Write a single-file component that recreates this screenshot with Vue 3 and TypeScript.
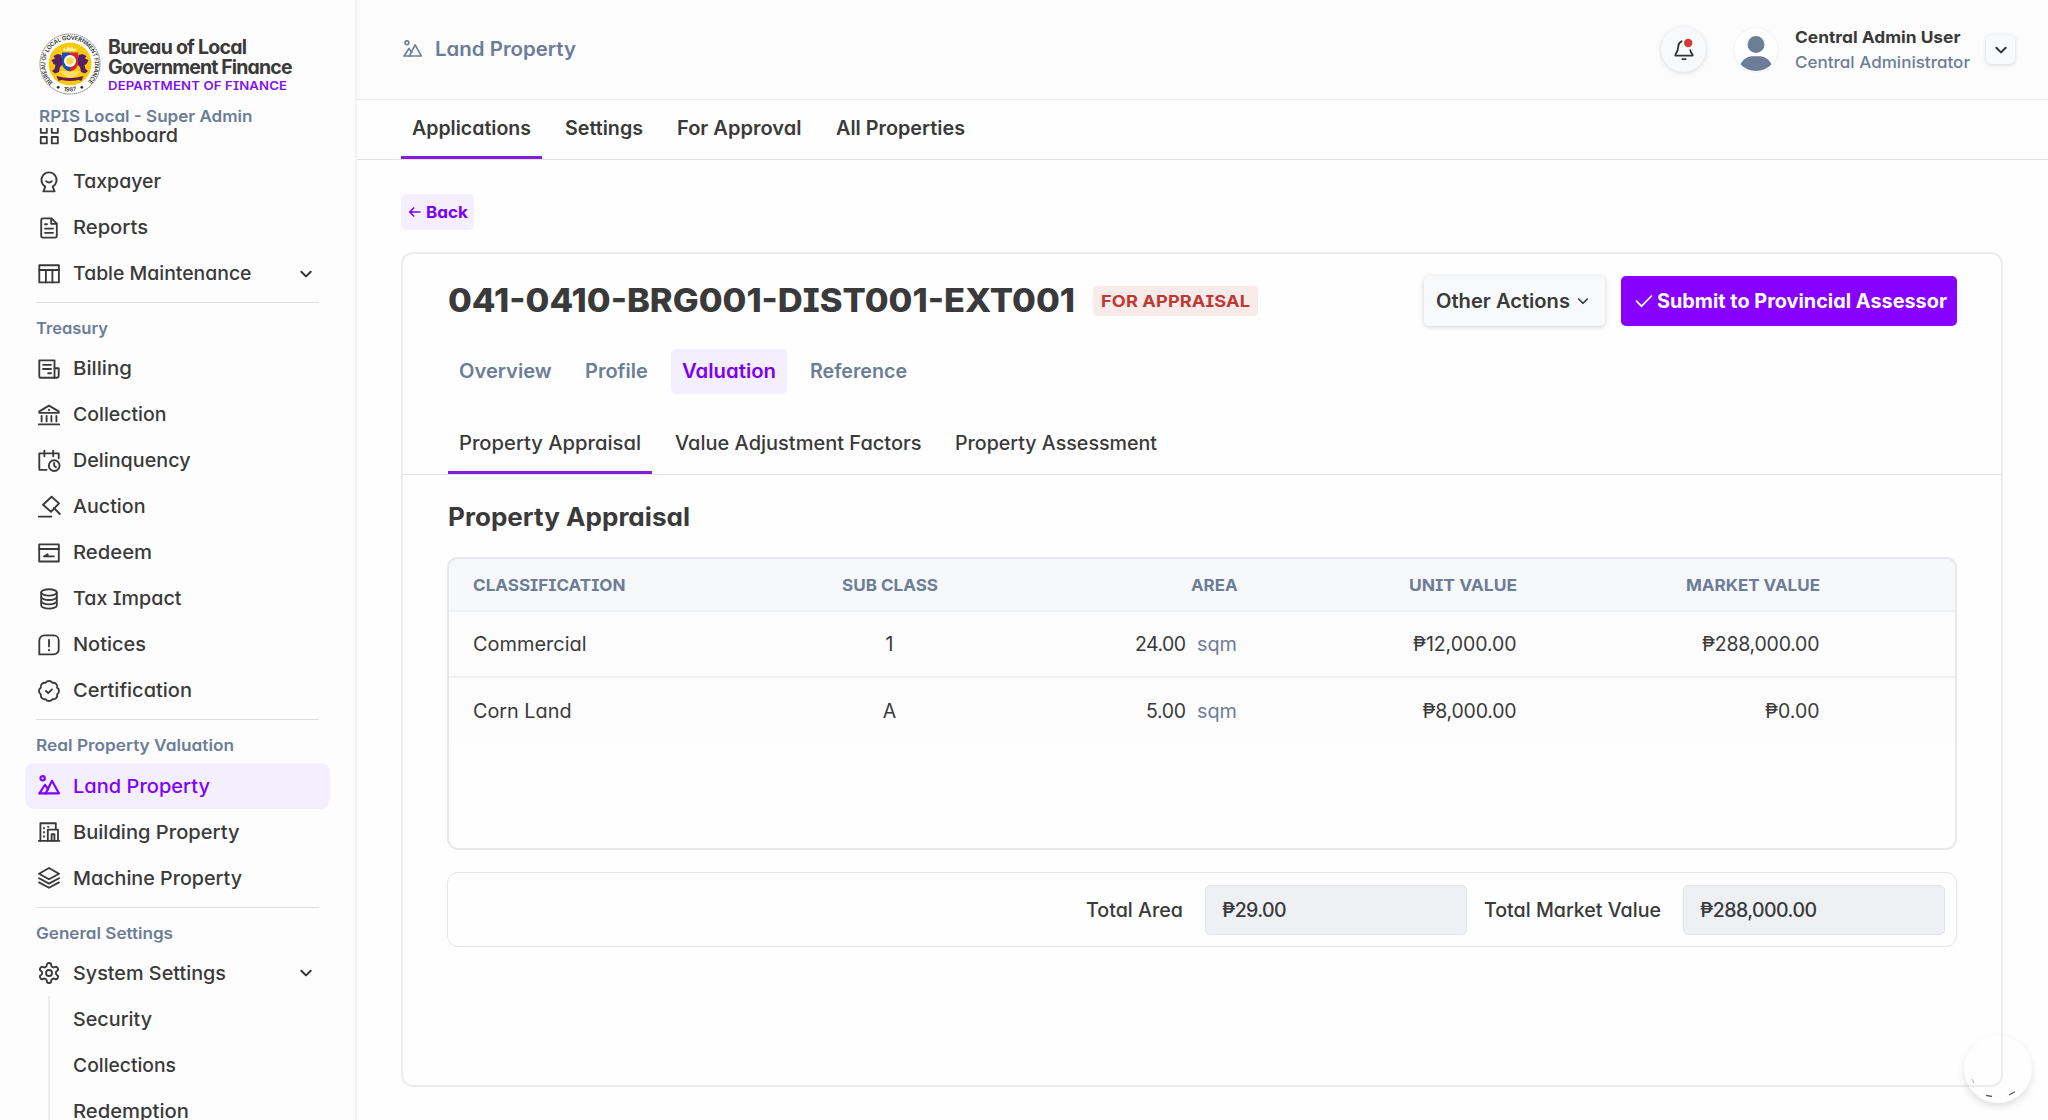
<script setup lang="ts">
type NavItem = { label: string; icon?: string; width: number; active?: boolean; chevron?: boolean }
type NavGroup = { title?: string; titleWidth?: number; items: NavItem[] }

// Widens a line of text, first through its letters and then through tracking, to the given measure.
const vFit = {
  mounted(el: HTMLElement, binding: { value: number }) {
    const count = (el.textContent ?? '').trim().length
    const natural = el.getBoundingClientRect().width
    if (count < 2) return
    const scale = Math.min(1.1, Math.max(1, binding.value / natural))
    const spacing = (binding.value / scale - natural) / (count - 1)
    el.style.width = `${binding.value}px`
    el.style.letterSpacing = `${spacing}px`
    el.style.transform = `scaleX(${scale})`
  },
}

const icons: Record<string, string[]> = {
  dashboard: ['M3.8 2.6h6v6.2h-6z', 'M14.8 2.6h6v6.2h-6z', 'M3.8 13h6v6.4h-6z', 'M14.8 13h6v6.4h-6z'],
  taxpayer: ['M8.3 16.6a7.6 7.6 0 1 1 7.4 0l1.9 4.8H6.4z', 'M9.2 11.2c1.6 1.7 4 1.7 5.6 0'],
  reports: ['M14.6 2.4H6a1.8 1.8 0 0 0-1.8 1.8v15.6A1.8 1.8 0 0 0 6 21.6h12a1.8 1.8 0 0 0 1.8-1.8V7.6z', 'M14.2 2.6v5.2h5.4', 'M8 8.2h2', 'M8 12.6h8', 'M8 16.8h8'],
  table: ['M2.3 3.2h19.6v17.2H2.3z', 'M2.3 8h19.6', 'M8.9 8v12.4', 'M15.4 8v12.4'],
  billing: ['M2.3 3.3h15.2v17.4H3.6a1.3 1.3 0 0 1-1.3-1.3z', 'M17.5 11.2h4.2v7.6a1.9 1.9 0 0 1-1.9 1.9h-2.3', 'M6 7.8h8', 'M6 12h8', 'M11.2 16.2H14'],
  collection: ['M2.3 8.4 12 2.6l9.7 5.8v1.5H2.3z', 'M4.6 13v5.4', 'M9.6 13v5.4', 'M14.4 13v5.4', 'M19.4 13v5.4', 'M1.8 21.4h20.4', 'M12 6.6v.6'],
  delinquency: ['M9.6 20.8H2.3V4.4h19.4v4.8', 'M7.4 1.6v5.6', 'M16.2 1.6v5.6', 'M22.6 16.6a5.4 5.4 0 1 1-10.8 0 5.4 5.4 0 0 1 10.8 0z', 'M17.2 14v2.8l1.8 1.4'],
  auction: ['M1.8 21.6h12.6', 'M14.6 1.8 22 8.4l-8 8.4L6 9.8z', 'M17 13l5.8 6'],
  redeem: ['M2.2 3.3h19.6v17.2H2.2z', 'M2.2 8h19.6', 'M7 15.4h9.8', 'M7.6 15.2l3-2v2'],
  tax: ['M19.8 5.4c0 1.8-3.5 3.2-7.8 3.2S4.2 7.2 4.2 5.4 7.7 2.2 12 2.2s7.8 1.4 7.8 3.2z', 'M4.2 5.4v13c0 1.8 3.5 3.2 7.8 3.2s7.8-1.4 7.8-3.2v-13', 'M4.2 9.8c0 1.8 3.5 3.2 7.8 3.2s7.8-1.4 7.8-3.2', 'M4.2 14.1c0 1.8 3.5 3.2 7.8 3.2s7.8-1.4 7.8-3.2'],
  notices: ['M2.3 21.4V7.4a5 5 0 0 1 5-5h9.4a5 5 0 0 1 5 5v9a5 5 0 0 1-5 5z', 'M12 6.8v6.6', 'M12 16.6v.8'],
  certification: ['M3.85 8.62a4 4 0 0 1 4.78-4.77 4 4 0 0 1 6.74 0 4 4 0 0 1 4.78 4.78 4 4 0 0 1 0 6.74 4 4 0 0 1-4.77 4.78 4 4 0 0 1-6.75 0 4 4 0 0 1-4.78-4.77 4 4 0 0 1 0-6.76z', 'M9 12l2.2 2.2 3.8-3.8'],
  land: ['M7.8 4.3a2.2 2.2 0 1 1-4.4 0 2.2 2.2 0 0 1 4.4 0z', 'M2.4 19.4 8 10.8l3.2 4.6', 'M8.6 19.4 15 6.8l7 12.6z', 'M2.4 19.4H9'],
  building: ['M1.8 20.8h20.6', 'M3.4 20.8V3.2h15.4V9', 'M10.8 20.8V9.6H21v11.2', 'M14.6 20.8v-6.6h2.8v6.6', 'M7 7.8v.5', 'M7 12v.5', 'M7 16.2v.5', 'M11 6.8h.5'],
  machine: ['M12 2 22 7.7l-10 5.5L2 7.7z', 'M2 12.2l10 5.4 10-5.4', 'M2 16.4l10 5.4 10-5.4'],
  settings: ['M12.22 2h-.44a2 2 0 0 0-2 2v.18a2 2 0 0 1-1 1.73l-.43.25a2 2 0 0 1-2 0l-.15-.08a2 2 0 0 0-2.73.73l-.22.38a2 2 0 0 0 .73 2.73l.15.1a2 2 0 0 1 1 1.72v.51a2 2 0 0 1-1 1.74l-.15.09a2 2 0 0 0-.73 2.73l.22.38a2 2 0 0 0 2.73.73l.15-.08a2 2 0 0 1 2 0l.43.25a2 2 0 0 1 1 1.73V20a2 2 0 0 0 2 2h.44a2 2 0 0 0 2-2v-.18a2 2 0 0 1 1-1.73l.43-.25a2 2 0 0 1 2 0l.15.08a2 2 0 0 0 2.73-.73l.22-.39a2 2 0 0 0-.73-2.73l-.15-.08a2 2 0 0 1-1-1.74v-.5a2 2 0 0 1 1-1.74l.15-.09a2 2 0 0 0 .73-2.73l-.22-.38a2 2 0 0 0-2.73-.73l-.15.08a2 2 0 0 1-2 0l-.43-.25a2 2 0 0 1-1-1.73V4a2 2 0 0 0-2-2z', 'M15 12a3 3 0 1 1-6 0 3 3 0 0 1 6 0z'],
}

const groups: NavGroup[] = [
  {
    items: [
      { label: 'Dashboard', icon: 'dashboard', width: 105 },
      { label: 'Taxpayer', icon: 'taxpayer', width: 88 },
      { label: 'Reports', icon: 'reports', width: 75 },
      { label: 'Table Maintenance', icon: 'table', width: 178.5, chevron: true },
    ],
  },
  {
    title: 'Treasury',
    titleWidth: 72,
    items: [
      { label: 'Billing', icon: 'billing', width: 59 },
      { label: 'Collection', icon: 'collection', width: 93.5 },
      { label: 'Delinquency', icon: 'delinquency', width: 117.5 },
      { label: 'Auction', icon: 'auction', width: 72.5 },
      { label: 'Redeem', icon: 'redeem', width: 79 },
      { label: 'Tax Impact', icon: 'tax', width: 108.5 },
      { label: 'Notices', icon: 'notices', width: 73 },
      { label: 'Certification', icon: 'certification', width: 119 },
    ],
  },
  {
    title: 'Real Property Valuation',
    titleWidth: 198,
    items: [
      { label: 'Land Property', icon: 'land', width: 137, active: true },
      { label: 'Building Property', icon: 'building', width: 166.5 },
      { label: 'Machine Property', icon: 'machine', width: 169 },
    ],
  },
  {
    title: 'General Settings',
    titleWidth: 137,
    items: [{ label: 'System Settings', icon: 'settings', width: 153, chevron: true }],
  },
]

const subItems: NavItem[] = [
  { label: 'Security', width: 79 },
  { label: 'Collections', width: 103 },
  { label: 'Redemption', width: 116 },
]

const topTabs = [
  { label: 'Applications', width: 119 },
  { label: 'Settings', width: 78 },
  { label: 'For Approval', width: 124.5 },
  { label: 'All Properties', width: 129 },
]
const pageTabs = [
  { label: 'Overview', width: 92.7 },
  { label: 'Profile', width: 62.8 },
  { label: 'Valuation', width: 94 },
  { label: 'Reference', width: 97 },
]
const valuationTabs = [
  { label: 'Property Appraisal', width: 182 },
  { label: 'Value Adjustment Factors', width: 246.5 },
  { label: 'Property Assessment', width: 202 },
]

const rows = [
  { name: 'Commercial', nameW: 113.5, sub: '1', area: '24.00', areaW: 51, unit: '₱12,000.00', unitW: 103.5, market: '₱288,000.00', marketW: 117.5 },
  { name: 'Corn Land', nameW: 98.5, sub: 'A', area: '5.00', areaW: 40, unit: '₱8,000.00', unitW: 94, market: '₱0.00', marketW: 54.5 },
]
</script>

<template>
  <div class="app">
    <aside class="sidebar">
      <div class="brand">
        <div class="brand-row">
          <svg class="seal" viewBox="0 0 62 62">
            <defs>
              <path id="seal-top" d="M14 49.4A24.8 24.8 0 1 1 48 49.4" />
              <path id="seal-bottom" d="M20 56.2A28.5 28.5 0 0 0 42 56.2" />
            </defs>
            <circle cx="31" cy="31" r="30" fill="#fff" stroke="#666" stroke-width=".9" stroke-dasharray="1.5 .6" />
            <circle cx="31" cy="31" r="21.5" fill="#fac90c" />
            <text class="seal-text"><textPath href="#seal-top" textLength="117">BUREAU OF LOCAL GOVERNMENT FINANCE</textPath></text>
            <text class="seal-text"><textPath href="#seal-bottom" startOffset="50%" text-anchor="middle">1987</textPath></text>
            <circle cx="19.2" cy="54.3" r="1.4" fill="#333" />
            <circle cx="42.8" cy="54.3" r="1.4" fill="#333" />
            <path d="M24 18l1-3 2 1.5 2-3 2 2 2-2 2 3 2-1.5 1 3z" fill="#fff2a8" />
            <path d="M20 38l11 10 11-10z" fill="#fddf62" />
            <path d="M22.5 22l-4-1-4 2 1.5 2.5-3.5 1.5 2 4 2 1-1 4-2.5 2 3 2.5 4-1.500 1-5 3-3z" fill="#562063" />
            <path d="M39.5 22l4-1 4 2-1.5 2.5 3.5 1.5-2 4-2 1 1 4 2.500 2-3 2.5-4-1.5-1-5-3-3z" fill="#562063" />
            <path d="M23 19.5h8v19q-8-2-8-9z" fill="#1c4fb4" />
            <path d="M31 19.5h8v10q0 7-8 9z" fill="#d7232c" />
            <circle cx="31" cy="28" r="6" fill="#fff" />
            <circle cx="31" cy="28" r="3.8" fill="#fbd84a" />
            <path d="M17.5 43q13.5 4 27 0l-2 5-3-1q-8 2-17 0l-3 1z" fill="#6a2148" />
          </svg>
          <div class="brand-name">
            <div class="bn"><span v-fit="139">Bureau of Local</span></div>
            <div class="bn"><span v-fit="184.5">Government Finance</span></div>
            <div class="dept"><span v-fit="179">DEPARTMENT OF FINANCE</span></div>
          </div>
        </div>
        <div class="role"><span v-fit="213.5">RPIS Local - Super Admin</span></div>
      </div>
      <nav class="nav">
        <div class="nav-list">
          <template v-for="(group, gi) in groups" :key="gi">
            <div v-if="group.title" class="nav-title"><span v-fit="group.titleWidth">{{ group.title }}</span></div>
            <div v-for="item in group.items" :key="item.label" class="nav-item" :class="{ active: item.active }">
              <svg class="icon" :class="'icon-' + item.icon" viewBox="0 0 24 24"><path v-for="(d, i) in icons[item.icon!]" :key="i" :d="d" /></svg>
              <span v-fit="item.width">{{ item.label }}</span>
              <svg v-if="item.chevron" class="chev" viewBox="0 0 14 14"><path d="M2.3 4.7l4.7 4.7 4.7-4.7" /></svg>
            </div>
          </template>
          <div class="subnav">
            <div v-for="item in subItems" :key="item.label" class="sub-item"><span v-fit="item.width">{{ item.label }}</span></div>
          </div>
        </div>
      </nav>
    </aside>

    <main class="main">
      <header class="topbar">
        <div class="crumb">
          <svg class="crumb-icon" viewBox="0 0 24 24"><path v-for="(d, i) in icons.land" :key="i" :d="d" /></svg>
          <span v-fit="141">Land Property</span>
        </div>
        <div class="user-area">
          <div class="bell">
            <svg viewBox="0 0 24 24" width="24" height="24">
              <path d="M9.6 3.3C7.4 4.2 6.4 6.2 6.3 8.4c-.1 4-1.1 6-2.9 8.3v.9h17.2v-.9c-1.3-1.4-2-2.900-2.3-4.600" />
              <path d="M10.4 21.2h3.2" />
              <circle cx="16.2" cy="5" r="4.2" />
            </svg>
          </div>
          <div class="avatar">
            <svg viewBox="0 0 44 44" width="44" height="44">
              <circle cx="22" cy="16.5" r="8.4" />
              <path d="M6.5 36.2C9.5 31 13.5 28.3 18 28.3h8c4.5 0 8.5 2.7 11.5 7.9A21 21 0 0 1 6.5 36.2z" />
            </svg>
          </div>
          <div class="user-text">
            <div class="user-name"><span v-fit="165.5">Central Admin User</span></div>
            <div class="user-role"><span v-fit="175">Central Administrator</span></div>
          </div>
          <div class="user-toggle"><svg class="chev" viewBox="0 0 14 14"><path d="M2.3 4.7l4.7 4.7 4.7-4.7" /></svg></div>
        </div>
      </header>

      <div class="top-tabs">
        <div v-for="(tab, i) in topTabs" :key="tab.label" class="tab" :class="{ current: i === 0 }"><span v-fit="tab.width">{{ tab.label }}</span></div>
      </div>

      <div class="content">
        <div class="back">
          <svg viewBox="0 0 14 14" width="14" height="14"><path d="M12.5 7H2M6.200 2.500 1.700 7l4.500 4.500" /></svg>
          <span v-fit="42">Back</span>
        </div>

        <section class="card">
          <div class="card-head">
            <h1><span v-fit="627">041-0410-BRG001-DIST001-EXT001</span></h1>
            <div class="badge"><span v-fit="149">FOR APPRAISAL</span></div>
            <div class="actions">
              <div class="btn-other">
                <span v-fit="134">Other Actions</span>
                <svg viewBox="0 0 12 12" width="12" height="12"><path d="M1.700 4l4.300 4.300L10.300 4" /></svg>
              </div>
              <div class="btn-submit">
                <svg viewBox="0 0 18 14" width="18" height="14"><path d="M1.5 7.2l5 5L16.5 2" /></svg>
                <span v-fit="290">Submit to Provincial Assessor</span>
              </div>
            </div>
          </div>

          <div class="pills">
            <div v-for="(tab, i) in pageTabs" :key="tab.label" class="pill" :class="{ on: i === 2 }"><span v-fit="tab.width">{{ tab.label }}</span></div>
          </div>

          <div class="val-tabs">
            <div v-for="(tab, i) in valuationTabs" :key="tab.label" class="tab" :class="{ current: i === 0 }"><span v-fit="tab.width">{{ tab.label }}</span></div>
          </div>

          <h2><span v-fit="242">Property Appraisal</span></h2>

          <div class="table">
            <div class="tr th">
              <div><span v-fit="152.5">CLASSIFICATION</span></div>
              <div class="mid"><span v-fit="96">SUB CLASS</span></div>
              <div class="num"><span v-fit="46.5">AREA</span></div>
              <div class="num"><span v-fit="108">UNIT VALUE</span></div>
              <div class="num"><span v-fit="134">MARKET VALUE</span></div>
            </div>
            <div v-for="row in rows" :key="row.name" class="tr td">
              <div><span v-fit="row.nameW">{{ row.name }}</span></div>
              <div class="mid"><span>{{ row.sub }}</span></div>
              <div class="num"><span v-fit="row.areaW">{{ row.area }}</span><span v-fit="40" class="unit">sqm</span></div>
              <div class="num"><span v-fit="row.unitW">{{ row.unit }}</span></div>
              <div class="num"><span v-fit="row.marketW">{{ row.market }}</span></div>
            </div>
          </div>

          <div class="totals">
            <span v-fit="97" class="total-label">Total Area</span>
            <div class="field area"><span v-fit="64.5">₱29.00</span></div>
            <span v-fit="177" class="total-label">Total Market Value</span>
            <div class="field"><span v-fit="117">₱288,000.00</span></div>
          </div>
        </section>
      </div>
    </main>

    <div class="bubble">
      <svg viewBox="0 0 68 68" width="68" height="68">
        <path d="M22 60.3l6 1.2" /><path d="M45 60l6-3.2" /><path class="faint" d="M8 44l2 4" />
      </svg>
    </div>
  </div>
</template>

<style>
html,
body {
  margin: 0;
  overflow: hidden;
  background: #fefefe;
}
</style>

<style scoped>
.app {
  position: relative;
  display: flex;
  width: 2048px;
  height: 1120px;
  overflow: hidden;
  font-family: Inter, "Noto Sans", sans-serif;
  font-feature-settings: "cv11", "cv08";
  font-size: 19px;
  color: #3a3a3a;
  line-height: 1;
}
.app * { box-sizing: border-box; }
span { display: inline-block; white-space: nowrap; transform-origin: 0 50%; }
svg { flex: none; fill: none; display: block; }

.sidebar {
  width: 357px;
  flex: none;
  display: flex;
  flex-direction: column;
  background: #fdfdfd;
  border-right: 2px solid #f2f2f2;
}
.brand { height: 126px; flex: none; padding: 33px 0 0 39px; }
.brand-row { display: flex; }
.seal { width: 62px; height: 62px; }
.seal-text { font-size: 5.8px; font-weight: 600; fill: #333; }
.brand-name { margin-left: 7px; padding-top: 4px; }
.bn { height: 20px; line-height: 20px; font-size: 19.5px; font-weight: 700; }
.dept { height: 18px; line-height: 17px; font-size: 12px; font-weight: 600; color: #7d12f2; }
.role { margin-top: 11px; line-height: 20px; font-size: 16.5px; font-weight: 600; color: #6c7d98; }

.nav { flex: 1; min-height: 0; overflow: hidden; }
.nav-list { margin-top: -13.5px; padding: 0 25px; }
.nav-item { display: flex; align-items: center; height: 46px; padding-left: 11.5px; border-radius: 9px; font-weight: 480; }
.nav-item .icon { width: 24px; height: 24px; margin-right: 12px; }
.nav-item .icon-dashboard { clip-path: inset(4.500px 0 0 0); }
.icon path, .crumb-icon path { stroke: currentColor; stroke-width: 1.85; stroke-linejoin: round; stroke-linecap: round; }
.nav-item.active { color: #8000ff; background: #f4efff; }
.nav-item.active .icon path { stroke-width: 2.1; }
.nav-item .chev { margin-left: auto; margin-right: 17px; }
.chev { width: 14px; height: 14px; }
.chev path { stroke: #333; stroke-width: 2; stroke-linecap: round; stroke-linejoin: round; }
.nav-title {
  height: 43.8px;
  margin: 5.5px 11px 0;
  border-top: 1px solid #e0e0e3;
  line-height: 50px;
  font-size: 16px;
  font-weight: 600;
  color: #6c7d98;
}
.subnav { margin-left: 22.5px; border-left: 2px solid #ededed; }
.sub-item { height: 46px; line-height: 47px; padding-left: 23px; font-weight: 480; }

.main { flex: 1; display: flex; flex-direction: column; min-width: 0; }
.topbar {
  display: flex;
  align-items: center;
  justify-content: space-between;
  height: 100px;
  padding: 0 33px 0 45px;
  background: #fcfcfc;
  border-bottom: 1px solid #ececec;
}
.crumb { display: flex; align-items: center; gap: 12px; font-size: 19.5px; font-weight: 600; color: #6c7d98; }
.crumb-icon { width: 21px; height: 21px; }
.user-area { display: flex; align-items: center; }
.bell, .avatar {
  display: flex;
  align-items: center;
  justify-content: center;
  width: 45px;
  height: 45px;
  border-radius: 50%;
}
.bell { background: #f8f9fb; box-shadow: 0 1px 5px rgba(0, 0, 0, 0.15); }
.bell path { stroke: #333; stroke-width: 1.8; stroke-linecap: round; stroke-linejoin: round; }
.bell circle { fill: #d63a36; }
.avatar { width: 44px; height: 44px; margin-left: 28px; background: #fff; box-shadow: 0 0 2px rgba(0, 0, 0, 0.12); overflow: hidden; }
.avatar svg { fill: #6c7d98; }
.user-text { width: 175px; margin-left: 17px; }
.user-name, .user-role { height: 25px; line-height: 25px; font-size: 16.5px; }
.user-name { font-weight: 650; }
.user-role { color: #6c7d98; font-weight: 450; }
.user-toggle {
  display: flex;
  align-items: center;
  justify-content: center;
  width: 29px;
  height: 29px;
  margin-left: 16px;
  border-radius: 5px;
  background: #f8f9fb;
  box-shadow: 0 1px 4px rgba(0, 0, 0, 0.15);
}

.top-tabs, .val-tabs { display: flex; border-bottom: 1px solid #e2e2e4; }
.top-tabs { height: 60px; padding-left: 44px; gap: 12px; font-weight: 570; font-size: 19.5px; }
.tab { padding: 0 11px; border-bottom: 3px solid transparent; }
.tab.current { border-color: #8020dc; }
.top-tabs .tab { line-height: 57px; }

.content { padding: 34px 45px 0 44px; }
.back {
  display: flex;
  align-items: center;
  gap: 4px;
  width: 73px;
  height: 36px;
  padding-left: 7px;
  border-radius: 5px;
  background: #f4efff;
  color: #7b00f5;
  font-size: 16.5px;
  font-weight: 700;
}
.back path { stroke: currentColor; stroke-width: 1.5; }

.card { height: 835px; margin-top: 22px; border: 2px solid #ebecee; border-radius: 12px; }
.card-head { display: flex; align-items: center; height: 94.5px; padding: 0 44px 0 45px; }
h1, h2 { margin: 0; font-weight: 750; }
h1 { font-size: 32.5px; font-weight: 800; }
.badge {
  height: 30px;
  margin-left: 18px;
  padding: 0 8px;
  border-radius: 4px;
  background: #f9ebea;
  color: #bc3a33;
  font-size: 16.5px;
  font-weight: 700;
  line-height: 30px;
}
.actions { display: flex; gap: 16px; margin-left: auto; font-size: 19.5px; }
.btn-other, .btn-submit { display: flex; align-items: center; height: 50px; border-radius: 5px; }
.btn-other { width: 181px; padding-left: 12px; gap: 7px; background: #f8f9fb; box-shadow: 0 1px 5px rgba(0, 0, 0, 0.18); font-weight: 600; }
.btn-other path { stroke: #333; stroke-width: 1.6; stroke-linecap: round; stroke-linejoin: round; }
.btn-submit { width: 336px; padding-left: 14px; gap: 4px; background: #8800ff; color: #fff; font-weight: 700; }
.btn-submit path { stroke: #fff; stroke-width: 1.7; stroke-linecap: round; }

.pills { display: flex; gap: 12px; padding-left: 44.500px; font-weight: 600; font-size: 19.5px; color: #6c7d98; }
.pill { height: 45px; padding: 0 11px; border-radius: 5px; line-height: 45px; }
.pill.on { background: #f4efff; color: #7b00f5; }

.val-tabs { height: 61px; margin-top: 20.5px; padding-left: 44.500px; gap: 12px; font-size: 19.5px; font-weight: 480; }
.val-tabs .tab { line-height: 59px; }

h2 { padding: 0 44.500px; height: 82px; line-height: 84px; font-size: 25px; }

.table {
  height: 293px;
  margin: 0 44px;
  overflow: hidden;
  border: 2px solid #e7e8eb;
  border-radius: 11px;
}
.tr { display: grid; grid-template-columns: 328.5px 176px 259.5px 279.5px 303px; padding-left: 24px; }
.tr > div { display: flex; align-items: center; padding-top: 2px; }
.tr .mid { justify-content: center; }
.tr .num { justify-content: flex-end; }
.th { height: 53px; background: #f7f8fa; border-bottom: 2px solid #f1f2f4; color: #6c7d98; font-size: 16.500px; font-weight: 700; }
.td { height: 68px; background: #fcfcfc; border-top: 2px solid #f2f2f3; font-size: 19.5px; font-weight: 430; }
.th + .td { border-top: 0; height: 64px; }
.unit { margin-left: 11px; color: #6c7d98; }

.totals {
  display: flex;
  align-items: center;
  justify-content: flex-end;
  height: 75px;
  margin: 22px 44px 0;
  padding-right: 11px;
  border: 1.5px solid #e3e4e7;
  border-radius: 11px;
  font-size: 19.5px;
  font-weight: 460;
}
.total-label { position: relative; top: 1px; }
.field {
  width: 262px;
  height: 50px;
  margin-left: 22px;
  padding-left: 16px;
  border: 1px solid #e2e3e6;
  border-radius: 5px;
  background: #eff0f4;
  line-height: 48px;
}
.field.area { margin-right: 17px; }

.bubble {
  position: absolute;
  left: 1964px;
  top: 1035px;
  width: 68px;
  height: 68px;
  border-radius: 50%;
  box-shadow: 0 4px 8px -1px rgba(0, 0, 0, 0.14);
}
.bubble path { stroke: #555; stroke-width: 1.3; }
.bubble .faint { stroke: #b9c4cc; }
</style>
